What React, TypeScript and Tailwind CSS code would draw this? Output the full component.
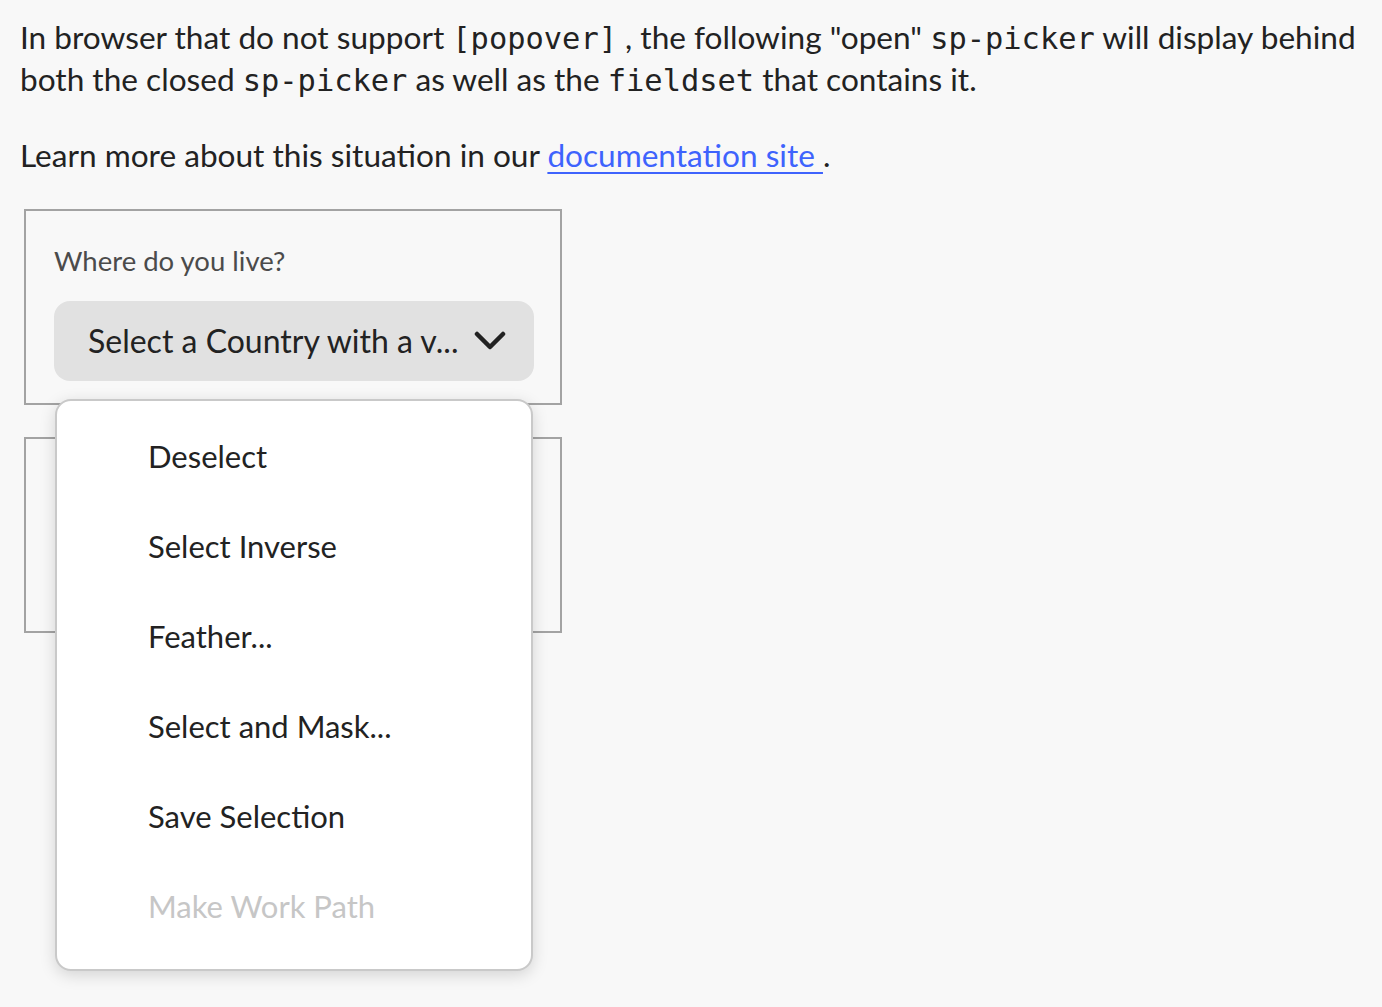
import React from "react";

const sans = "font-['Lato',sans-serif]";
const mono = "font-['DejaVu_Sans_Mono',monospace] text-[30.4px] leading-none";

function Chevron() {
  return (
    <svg width="32" height="20" viewBox="0 0 32 20" fill="none">
      <path d="M3 3 L16 16 L29 3" stroke="#222222" strokeWidth="4.5" strokeLinecap="round" strokeLinejoin="round" />
    </svg>
  );
}

const items = [
  { label: "Deselect", disabled: false },
  { label: "Select Inverse", disabled: false },
  { label: "Feather...", disabled: false },
  { label: "Select and Mask...", disabled: false },
  { label: "Save Selection", disabled: false },
  { label: "Make Work Path", disabled: true },
];

export default function App() {
  return (
    <div className={`min-h-[1007px] w-[1382px] bg-[#f8f8f8] text-[#222222] ${sans} text-[31.6px] leading-[42px] px-[20px] pt-[16px]`}>
      <p className="h-[84px] whitespace-nowrap">
        In browser that do not support <code className={mono}>[popover]</code> , the following "open" <code className={mono}>sp-picker</code> will display behind
        <br />
        both the closed <code className={mono}>sp-picker</code> as well as the <code className={mono}>fieldset</code> that contains it.
      </p>
      <p className="mt-[34px] h-[42px]">
        Learn more about this situation in our <a href="#" className="text-[#3e63fd] underline decoration-2 underline-offset-[5px]">documentation site </a>.
      </p>

      <div className="relative mt-[33px] ml-[4px] flex flex-col gap-[32px]">
        <fieldset className="w-[538px] h-[196px] border-2 border-[#a3a3a3] pl-[28px] pr-[26px] pt-[32px]">
          <div className="text-[27.5px] leading-[36px] text-[#4b4b4b]">Where do you live?</div>
          <div className="mt-[22px] h-[80px] w-[480px] rounded-[16px] bg-[#e1e1e1] flex items-center pl-[34px] pr-[28px]">
            <span className="flex-1 text-[32px] text-[#222222] whitespace-nowrap overflow-hidden">Select a Country with a v...</span>
            <Chevron />
          </div>
        </fieldset>
        <fieldset className="w-[538px] h-[196px] border-2 border-[#a3a3a3]"></fieldset>

        <div className="absolute left-[31px] top-[190px] w-[478px] h-[572px] bg-white border-2 border-[#c9c9c9] rounded-[16px] shadow-[0_4px_16px_rgba(0,0,0,0.15)] pt-[10px] pb-[18px]">
          {items.map((it) => (
            <div
              key={it.label}
              className={`h-[90px] flex items-center pl-[91px] text-[31px] ${it.disabled ? "text-[#c6c6c6]" : "text-[#222222]"}`}
            >
              {it.label}
            </div>
          ))}
        </div>
      </div>
    </div>
  );
}
